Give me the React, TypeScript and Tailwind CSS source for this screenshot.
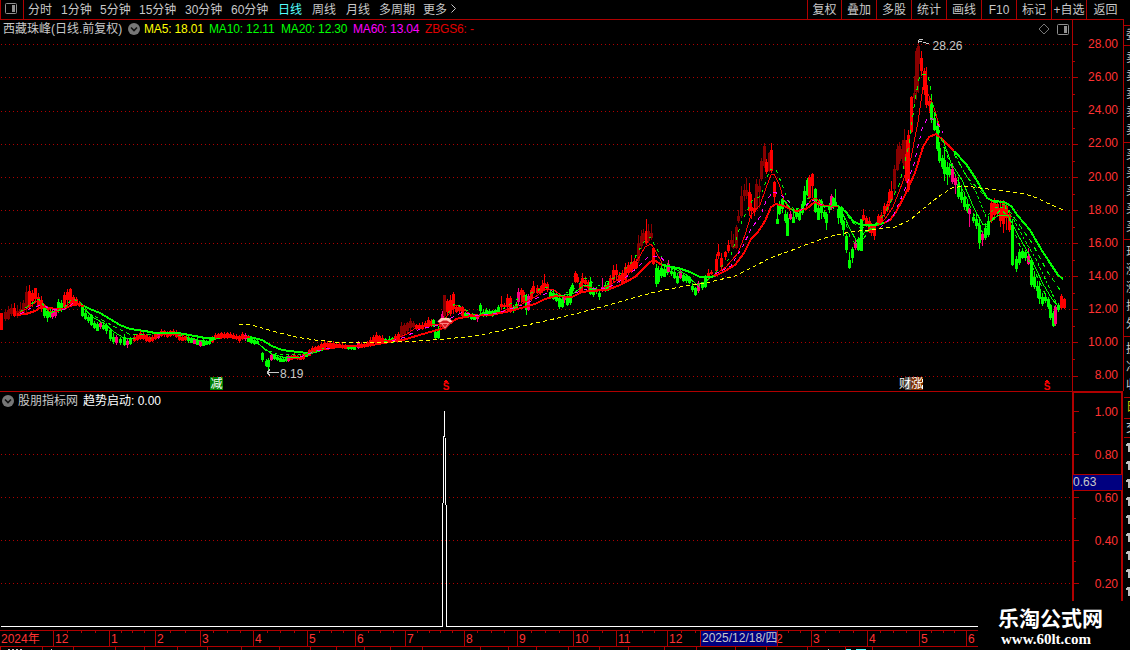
import React from "react";

type Tone = "r" | "d" | "g" | "p";
const tones: Record<Tone, string> = { r: "#ff0000", d: "#880000", g: "#00ff00", p: "#ff0080" };

// Each candle: x wickTop bodyTop bodyBottom wickBottom tone
const CANDLES = `
1 313 313 329 329 r;5 309 312 318 320 d;8 306 310 318 319 d;11 304 308 313 315 d;14 303 308 315 316 r;17 305 311 315 317 d;20 302 309 313 315 d;23 300 303 312 314 d;26 286 292 307 312 d;29 285 291 306 309 r;32 290 293 300 306 r;35 288 288 298 302 r;38 293 297 305 308 r;41 296 300 308 311 r;44 306 308 315 317 g;47 308 311 317 321 g;50 309 312 316 317 g;52 309 311 316 318 p;55 308 310 315 317 p;58 299 302 310 312 g;61 300 303 309 311 g;64 292 295 306 308 r;67 289 292 299 303 r;70 288 289 303 304 r;73 295 297 303 304 r;76 297 299 304 305 r;79 301 303 305 306 r;
82 304 307 315 316 g;85 310 313 318 319 g;88 315 317 320 322 g;91 314 315 324 325 g;94 321 323 327 328 g;97 322 324 330 330 g;100 322 323 326 328 p;103 322 325 328 329 g;106 323 325 330 333 g;110 328 330 338 340 g;113 333 337 341 343 g;116 335 337 342 344 p;120 337 339 342 344 g;124 334 337 344 345 g;127 338 341 344 347 p;130 337 339 343 344 g;134 335 337 340 341 r;137 334 335 339 340 r;140 331 333 338 339 r;143 332 334 338 339 r;146 334 335 340 341 r;149 336 337 341 341 r;152 335 337 340 341 r;155 332 334 338 339 r;158 333 334 337 338 p;161 329 331 335 336 r;164 330 331 334 336 r;167 331 332 336 337 r;170 330 331 335 336 r;173 329 331 334 335 r;176 330 332 336 337 r;179 334 336 339 340 r;182 335 337 340 340 r;185 336 337 339 340 r;188 336 337 340 342 g;191 337 338 342 342 g;194 338 340 343 343 p;197 338 341 344 344 g;200 340 341 345 346 p;203 339 342 345 345 g;206 340 341 344 344 g;209 339 341 343 344 g;212 336 337 341 342 r;215 333 335 338 339 r;218 333 334 337 338 r;221 332 333 337 338 r;224 332 334 337 338 r;227 332 333 336 338 r;230 332 334 337 337 r;233 333 335 338 338 r;236 334 336 338 339 r;239 335 336 340 342 r;242 332 334 338 339 r;245 333 335 338 340 p;248 335 337 341 341 g;251 337 338 342 343 g;254 339 340 343 344 g;257 339 341 343 343 g;
262 352 353 359 361 g;266 359 361 365 366 g;268 358 360 366 372 g;271 354 355 359 360 p;274 354 355 358 359 g;277 356 357 359 360 g;280 357 358 361 361 g;283 357 359 361 361 g;286 356 357 360 361 g;288 355 356 360 361 p;291 355 356 359 359 r;294 353 355 358 358 r;297 355 356 358 359 r;300 354 357 359 359 r;303 352 354 358 359 r;306 352 354 356 356 g;309 349 350 355 355 r;312 346 348 352 353 r;315 346 347 351 352 r;318 345 346 350 350 r;321 342 344 348 349 r;324 341 343 347 348 r;327 341 343 346 347 r;330 342 343 347 347 r;333 341 343 345 346 r;336 342 344 347 347 r;339 342 344 347 347 r;342 343 345 347 348 r;345 344 345 348 348 r;348 345 346 348 349 g;351 346 347 348 349 g;354 346 347 349 349 g;358 341 343 347 348 p;361 343 344 347 347 r;364 342 344 346 347 r;367 341 342 346 346 r;370 337 340 345 346 r;373 335 337 342 343 r;376 332 335 341 342 r;379 335 336 341 342 r;382 335 338 341 341 r;385 338 339 342 342 g;389 336 339 342 342 g;392 337 338 342 342 g;395 334 336 340 340 r;398 332 334 339 340 r;
401 322 326 336 337 d;404 323 325 333 334 d;407 322 323 330 333 d;410 318 321 327 330 d;413 321 323 326 327 d;416 324 325 328 329 r;419 323 325 328 328 r;422 322 325 328 329 r;425 321 323 326 328 r;428 317 320 326 327 r;431 319 321 325 326 r;433 319 320 325 326 g;435 330 332 337 338 g;438 326 329 337 338 g;440 320 323 326 327 r;442 311 314 318 319 p;444 295 295 315 317 d;447 299 301 311 314 r;450 295 300 313 315 r;453 292 294 308 313 r;456 306 307 311 312 r;459 305 307 310 312 r;462 306 307 315 316 r;465 312 313 315 317 g;468 312 314 316 317 g;471 314 315 318 319 g;474 315 317 319 319 g;477 315 316 318 321 p;480 303 305 310 313 g;483 309 312 315 316 g;486 308 310 315 316 g;489 309 311 315 315 g;492 310 311 315 316 g;495 309 310 313 314 g;498 305 307 311 312 g;501 296 304 306 309 r;504 303 305 306 306 r;507 294 298 306 308 r;510 296 298 311 312 r;513 305 307 310 312 g;516 302 304 308 309 g;518 288 292 301 304 p;521 288 290 294 302 r;523 290 292 301 303 r;526 294 296 309 314 g;528 294 296 309 310 p;531 288 290 298 300 r;533 281 286 292 293 r;537 285 288 292 293 r;540 286 288 292 294 r;542 280 285 290 292 r;544 274 283 286 289 r;547 282 284 289 291 r;550 289 292 297 298 g;553 290 293 298 299 g;556 291 294 300 301 g;559 297 298 306 308 g;562 297 299 306 307 g;564 294 296 299 302 p;567 294 297 304 305 g;570 287 289 302 304 g;572 283 285 290 293 g;575 271 273 281 282 r;577 274 277 281 282 r;580 281 283 291 292 r;582 273 278 282 291 r;585 277 280 283 285 r;588 280 282 287 289 r;590 277 282 293 294 g;593 287 289 294 296 g;596 287 289 291 293 g;599 289 293 296 299 g;602 278 287 290 291 p;605 282 285 290 291 g;608 281 283 289 290 g;
610 275 278 288 289 r;613 265 270 279 281 r;616 264 270 274 280 r;619 272 275 280 282 r;622 270 273 283 284 r;625 263 267 279 280 r;628 262 265 272 274 r;631 255 262 271 272 r;634 258 261 268 270 r;636 259 262 267 268 r;638 235 243 260 262 d;641 230 236 245 248 d;643 229 233 239 241 d;646 219 231 242 244 r;648 224 231 240 242 d;651 224 233 237 239 d;653 247 248 263 264 r;
656 264 268 283 286 g;658 266 270 281 283 g;661 262 268 275 277 g;664 266 269 276 276 g;667 263 265 272 274 g;668 260 264 271 271 p;671 268 271 273 275 g;674 269 272 277 278 g;677 273 276 282 283 g;680 270 271 277 278 p;683 273 275 280 281 g;686 274 276 280 282 g;689 276 277 282 283 g;692 283 286 289 291 g;695 287 288 294 295 g;698 281 283 290 292 p;702 282 283 287 289 g;705 275 278 286 287 g;708 269 273 276 279 r;711 270 272 273 274 r;
716 254 259 270 272 r;718 244 252 255 258 r;721 253 258 266 268 r;725 251 252 256 259 r;728 240 245 250 252 r;731 231 240 243 246 d;733 234 244 247 248 d;736 225 227 247 248 d;738 210 216 220 222 d;741 186 196 215 217 d;744 184 190 195 200 d;746 178 190 195 198 d;749 183 192 210 215 r;751 194 207 210 218 r;754 198 208 211 215 r;756 179 184 207 208 d;759 179 186 191 207 d;761 158 161 178 180 d;764 143 146 165 167 d;766 159 162 171 173 r;769 152 153 170 171 d;771 143 150 170 172 r;
774 181 182 196 202 r;777 204 219 223 223 g;779 201 204 213 214 g;782 198 199 208 212 g;785 210 214 220 222 g;787 212 218 235 235 g;790 211 214 218 219 p;793 211 217 222 222 g;796 208 210 216 218 g;799 211 213 219 220 g;802 201 204 212 214 g;804 186 191 204 205 g;807 178 180 194 195 g;809 175 177 197 198 r;812 173 174 185 197 r;815 188 189 211 212 g;818 202 208 219 219 g;821 199 201 212 218 g;824 210 212 216 218 g;826 212 214 222 229 g;829 203 206 209 212 g;831 194 196 207 209 p;833 197 198 206 208 g;835 189 202 205 206 g;838 208 209 217 223 g;841 206 207 222 224 g;843 220 221 229 235 g;846 234 236 249 252 g;849 252 260 267 268 g;852 247 249 257 262 g;855 240 243 247 249 p;858 237 239 249 250 g;861 219 219 250 250 g;
863 209 215 219 220 r;866 216 218 224 226 r;869 217 221 231 232 r;871 223 225 232 235 r;874 224 225 235 239 r;878 214 216 223 225 r;881 212 215 221 222 r;884 203 206 213 216 r;887 201 204 209 211 r;889 189 192 202 205 r;891 181 191 199 201 r;894 165 169 188 192 d;897 145 149 169 170 d;899 142 146 160 163 d;902 140 149 158 162 d;904 129 140 165 168 d;906 140 154 180 182 r;908 130 135 189 191 r;911 96 97 131 132 r;914 76 93 97 102 d;916 48 51 91 99 d;918 43 46 63 92 d;921 51 58 70 75 r;924 68 71 89 94 r;926 67 85 104 107 r;929 98 101 105 112 r;931 95 104 119 122 g;
934 113 118 129 130 g;937 124 126 148 150 g;939 142 148 160 162 g;942 155 158 166 168 g;944 150 160 173 180 g;947 162 167 174 184 g;949 163 169 174 176 g;952 163 169 181 183 p;955 175 178 184 193 p;958 177 184 196 198 g;961 185 192 199 202 g;964 192 197 206 209 g;967 200 204 210 212 g;969 208 209 213 226 p;973 213 217 220 222 g;976 214 219 225 228 g;979 218 225 242 248 g;982 232 234 239 245 p;985 223 228 237 239 g;988 216 221 234 236 g;991 200 203 220 222 r;994 198 202 214 219 r;997 202 204 213 216 r;1000 200 208 220 226 r;1003 200 202 223 232 r;1006 203 206 217 229 r;1009 212 214 229 231 r;1012 219 225 264 265 g;1016 256 259 268 271 g;1019 249 252 262 264 g;1022 248 251 257 258 g;1025 250 252 257 260 g;1028 248 256 263 264 p;1031 258 260 284 286 g;1034 271 277 286 288 g;1037 281 286 290 297 g;1039 281 289 298 303 g;1042 293 297 303 305 g;1045 294 297 300 302 g;1048 297 299 306 308 g;1050 304 305 317 319 g;1053 311 313 325 326 g;1055 305 307 323 325 p;1058 303 305 309 311 g;1061 294 296 307 308 r;1064 298 299 307 308 r`
  .split(";")
  .map((row) => {
    const [x, wt, bt, bb, wb, tone] = row.trim().split(" ");
    return { x: +x, wt: +wt, bt: +bt, bb: +bb, wb: +wb, tone: tone as Tone };
  });

interface Line { c: string; w?: number; dash?: string; pts: string }

const R = "#ff0000";
const G = "#00ff00";
const M = "#ff00ff";

const lines: Line[] = [
  { c: R, w: 2, pts: "17,315 26,314 35,311 40,308 46,307 55,309 64,309 70,306 78,304 84,306" },
  { c: G, w: 2, pts: "84,306 90,309 100,313 110,319 120,325 130,329 145,331 155,333 178,333 195,336 205,338 215,338" },
  { c: R, w: 2, pts: "215,338 230,337 250,337" },
  { c: G, w: 2, pts: "250,337 262,340 272,346 282,350 298,352 308,353" },
  { c: R, w: 2, pts: "308,353 318,350 332,348 345,346 372,345 390,342 403,340 416,336 430,332 444,328 456,319 470,316 490,315 510,311 525,307 535,304 545,299 556,296 572,297 582,292 590,291 607,290 620,285 635,277 643,269 650,262 654,260 662,265" },
  { c: G, w: 2, pts: "662,265 678,268 690,272 700,277 710,277 715,276" },
  { c: R, w: 2, pts: "715,276 725,271 735,265 744,253 751,239 758,232 765,221 771,207 776,204 784,206 790,209 797,211 806,209 815,202 820,205 828,206 838,206" },
  { c: G, w: 2, pts: "838,206 846,212 853,221 861,225 874,225 884,223" },
  { c: R, w: 2, pts: "884,223 890,220 896,212 905,195 915,173 923,147 929,137 936,134 943,140 954,151" },
  { c: G, w: 2, pts: "954,151 966,164 976,179 987,198 993,201 1004,202 1011,206 1018,216 1030,230 1041,249 1050,263 1058,275 1063,279" },
  { c: R, pts: "17,314 28,308 37,301 43,303 49,311 57,312 64,308 70,303 77,302 82,307" },
  { c: G, pts: "82,307 94,318 105,324 114,332 124,338 135,338 151,338" },
  { c: R, pts: "135,338 150,338 165,334 178,334 190,338" },
  { c: G, pts: "190,338 205,342 220,338" },
  { c: R, pts: "220,337 232,336 248,337" },
  { c: G, pts: "248,338 260,345 272,354 286,358 300,357 310,354 323,350" },
  { c: R, pts: "300,357 312,352 325,347 342,346 360,347 376,342 392,340 407,334 417,327 430,325 440,324 450,313 456,305 463,309 470,314 485,316 500,312 520,305 535,297 546,289 554,290 562,296" },
  { c: G, pts: "560,296 574,293 583,286 590,285" },
  { c: R, pts: "584,286 600,290 613,283 625,275 637,261 645,247 651,244 656,252 662,263" },
  { c: G, pts: "662,264 675,269 687,275 697,285 706,281 713,276" },
  { c: R, pts: "713,276 726,267 738,253 745,235 751,215 760,205 766,188 771,175 774,174 779,184 784,200 790,211" },
  { c: G, pts: "784,200 790,208 797,214 804,210" },
  { c: R, pts: "806,207 811,200 816,198 822,205" },
  { c: G, pts: "825,207 838,205 845,218 850,229 857,242 865,232 875,228" },
  { c: R, pts: "877,226 885,219 893,207 902,184 911,158 918,122 923,87 926,90 932,102 940,127" },
  { c: G, pts: "943,140 951,163 962,180 973,206 983,225 988,224 998,215 1008,215 1018,235 1030,256 1043,284 1052,299 1058,306" },
  { c: G, dash: "3 2", pts: "954,152 964,172 976,192 986,217 995,208 1005,207 1014,220 1024,239 1036,259 1048,285 1057,304" },
  { c: G, dash: "4 3", pts: "20,312 31,304 39,299 49,313 63,309 72,299 80,302 90,314 104,321 115,327 129,334 154,335" },
  { c: G, dash: "4 4", pts: "178,335 200,341 215,339" },
  { c: G, dash: "3 3", pts: "255,340 265,350 278,354 292,355 305,354 325,348" },
  { c: G, dash: "3 5", pts: "444,320 455,303 464,309 475,315 500,311 519,298 536,291 546,287 560,296 574,289 585,278 598,286 618,276 633,261 643,243 650,237 656,247 666,266 690,279 700,287 713,275 730,258 742,221 752,201 761,196 770,169 776,169 786,195 795,212 805,201 815,193 825,208 837,205" },
  { c: G, dash: "4 5", pts: "841,207 850,237 858,247 870,229 884,215 899,185 909,145 915,100 920,74 928,74 933,105 943,145 952,168 966,197 982,232 1001,209 1009,218 1020,246 1034,270 1048,300 1055,307" },
  { c: G, dash: "5 4", pts: "954,154 967,177 980,191 991,201 1005,205 1018,223 1032,243 1047,271 1062,293" },
  { c: G, dash: "5 4", pts: "842,207 852,222 861,228 874,225" },
  { c: M, dash: "4 5", pts: "20,314 33,307 43,305 50,309 65,309 75,302" },
  { c: M, dash: "4 5", pts: "300,357 316,351 330,348" },
  { c: M, dash: "4 5", pts: "392,341 405,337 420,329 440,325 453,317 463,312 476,316 498,313 525,304 541,296 552,290" },
  { c: M, dash: "4 5", pts: "575,293 590,288 606,289 625,278 639,266 648,257 660,256 666,263" },
  { c: M, dash: "4 4", pts: "715,274 731,266 743,246 751,229 760,217 766,201 773,192 780,194 790,203" },
  { c: M, dash: "4 4", pts: "800,211 812,200 824,206" },
  { c: M, dash: "4 5", pts: "880,228 893,216 904,192 914,164 922,129 928,117 936,121 943,133" },
  { c: "#ffff00", dash: "4 3", pts: "239,324 252,325 265,329 280,333 296,337 315,340 335,342 365,342 393,342 418,341 445,339 475,336 509,329 545,321 575,314 605,306 633,298 655,292 680,287 710,282 735,276 753,267 770,258 790,251 808,244 828,237 850,232 878,229 895,227 910,220 923,209 938,197 952,188 965,186 980,188 1005,191 1025,194 1037,198 1045,202 1052,205 1063,210" },
];

const priceRows = ["28.00", "26.00", "24.00", "22.00", "20.00", "18.00", "16.00", "14.00", "12.00", "10.00", "8.00"];
const priceY = [44, 77, 111, 144, 177, 210, 243, 276, 309, 342, 376];
const indRows = ["1.00", "0.80", "0.60", "0.40", "0.20"];
const indY = [411, 454, 497, 540, 583];

const periods: [string, string][] = [
  ["分时", "w-[33px]"], ["1分钟", "w-[39px]"], ["5分钟", "w-[39px]"], ["15分钟", "w-[46px]"], ["30分钟", "w-[46px]"],
  ["60分钟", "w-[47px]"], ["日线", "w-[34px]"], ["周线", "w-[34px]"], ["月线", "w-[33px]"], ["多周期", "w-[44px]"], ["更多", "w-[26px]"],
];
const tools: [string, string][] = [
  ["复权", "w-[34px]"], ["叠加", "w-[35px]"], ["多股", "w-[35px]"], ["统计", "w-[35px]"], ["画线", "w-[35px]"],
  ["F10", "w-[35px]"], ["标记", "w-[35px]"], ["+自选", "w-[35px]"], ["返回", "w-[38px]"],
];
const months: [string, string][] = [
  ["2024年", "w-[53px]"], ["12", "w-[56px]"], ["1", "w-[46px]"], ["2", "w-[45px]"], ["3", "w-[53px]"], ["4", "w-[54px]"],
  ["5", "w-[48px]"], ["6", "w-[50px]"], ["7", "w-[59px]"], ["8", "w-[53px]"], ["9", "w-[56px]"], ["10", "w-[43px]"],
  ["11", "w-[51px]"], ["12", "w-[107px]"], ["2", "w-[37px]"], ["3", "w-[56px]"], ["4", "w-[52px]"], ["5", "w-[47px]"], ["6", "w-[12px]"],
];
const monthX = [0, 53, 109, 155, 200, 253, 307, 355, 405, 464, 517, 573, 616, 667, 777, 811, 867, 919, 966];
const lowerTicks = [0, 42, 73, 115, 144, 177, 207, 241, 279, 310, 336, 364, 390, 422, 480, 508, 536, 568, 599, 628, 664, 696, 735, 766, 807, 845, 872];

function PanelIcon() {
  return (
    <svg width="12" height="11" viewBox="0 0 12 11" className="shrink-0" fill="none" stroke="#909090">
      <rect x=".5" y=".5" width="11" height="10" rx="1" />
      <path d="M7 2h3v7H7z" fill="#909090" stroke="none" />
    </svg>
  );
}

function CollapseIcon() {
  return (
    <svg width="12" height="12" viewBox="0 0 12 12" className="shrink-0">
      <circle cx="6" cy="6" r="6" fill="#777" />
      <path d="M3 4.5 6 7.5 9 4.5" fill="none" stroke="#111" strokeWidth="1.6" />
    </svg>
  );
}

function Signal({ x }: { x: number }) {
  return (
    <g fill={R}>
      <path d={`M${x - 2.5} 382l2.5-3 2.5 3z`} />
      <text x={x} y="390" fontSize="10" fontWeight="bold" textAnchor="middle">S</text>
    </g>
  );
}

function PriceChart() {
  return (
    <svg width="1072" height="353" viewBox="0 38 1072 353" className="block" shapeRendering="crispEdges">
      {priceY.map((y) => (
        <path key={y} d={`M1 ${y + 0.5}H1072`} stroke="#b00000" strokeDasharray="1 3" />
      ))}
      {CANDLES.map((k, i) => (
        <g key={i} fill={tones[k.tone]}>
          <rect x={k.x} y={k.wt} width="1" height={k.wb - k.wt + 1} />
          <rect x={k.x - 1} y={k.bt} width="3" height={k.bb - k.bt + 1} />
        </g>
      ))}
      {lines.map((l, i) => (
        <polyline key={i} points={l.pts} fill="none" stroke={l.c} strokeWidth={l.w ?? 1} strokeDasharray={l.dash} />
      ))}
      <g shapeRendering="auto">
        <path d="M437.5 321.5l3.5-3.5h8l3.500 3.500-7.500 8.500z" fill="#d71920" />
        <path d="M437.500 321.500l3.500-3.500h8l3.500 3.500-2.500 1-3-2h-4l-3 2z" fill="#ffc8b8" />
        <path d="M440 323.500h9M442 324l3 4 3-4" stroke="#ff8080" fill="none" />
      </g>
      <g stroke="#c8c8c8" fill="none">
        <path d="M918.5 43v-3M919 39.500h4M919 41.500h3M923 42.500h3M926 43.500h3" />
        <path d="M267 372.5h12M267 372.5l3-3M267 372.5l3 3" />
      </g>
      <g fill="#c8c8c8" fontSize="12" className="font-['Liberation_Sans',sans-serif]">
        <text x="932.5" y="50">28.26</text>
        <text x="280" y="378">8.19</text>
      </g>
      <rect x="210" y="377" width="13" height="13" fill="#008000" />
      <rect x="905" y="377" width="6" height="13" fill="#555" />
      <rect x="911" y="377" width="12" height="13" fill="#803000" />
      <g fill="#fff" fontSize="12">
        <text x="210.5" y="388">减</text>
        <text x="899" y="388">财</text>
        <text x="911" y="388">涨</text>
      </g>
      <path d="M922.5 379v3M922.5 385v4" stroke="#fff" />
      <Signal x={446} />
      <Signal x={1047} />
    </svg>
  );
}

function TriggerChart() {
  return (
    <svg width="1072" height="221" viewBox="0 409 1072 221" className="block" shapeRendering="crispEdges">
      {indY.slice(1).map((y) => (
        <path key={y} d={`M1 ${y + 0.5}H1072`} stroke="#b00000" strokeDasharray="1 3" />
      ))}
      <path d="M1 626.5H442.5V547l1-85 1-51 1 51 1 85V626.5H978" fill="none" stroke="#fff" />
    </svg>
  );
}

function ScaleTicks({ ys, top, height, half }: { ys: number[]; top: number; height: number; half: number }) {
  return (
    <svg width="6" height={height} viewBox={`0 ${top} 6 ${height}`} className="block shrink-0" stroke="#b00000" shapeRendering="crispEdges">
      {ys.map((y) => (
        <path key={y} d={`M0 ${y + 0.5}h5M0 ${y + half + 0.5}h2`} />
      ))}
    </svg>
  );
}

function SideStrip() {
  const cell = "flex shrink-0 flex-col overflow-hidden border-b border-[#b00000] pl-[2px] whitespace-nowrap";
  return (
    <div className="flex h-[580px] w-[6px] shrink-0 flex-col overflow-hidden text-[12px] leading-[18px]">
      <div className={`${cell} h-[6px]`} />
      <div className={`${cell} h-[20px]`}>委</div>
      <div className={`${cell} h-[97px] pt-[3px]`}>{[1, 2, 3, 4, 5].map((n) => <span key={n}>卖</span>)}</div>
      <div className={`${cell} h-[97px] pt-[3px]`}>{[1, 2, 3, 4, 5].map((n) => <span key={n}>买</span>)}</div>
      <div className={`${cell} h-[97px] pt-[3px]`}>{["现", "涨", "涨", "振", "外"].map((t, n) => <span key={n}>{t}</span>)}</div>
      <div className={`${cell} h-[61px] pt-[3px]`}>{["换", "净", "收"].map((t) => <span key={t}>{t}</span>)}</div>
      <div className={`${cell} h-[21px] text-[#c8c800]`}>日</div>
      <div className={`${cell} h-[19px]`}>交</div>
      <div className="flex flex-col gap-[6px] pt-[4px] pl-[2px]">
        {[1, 2, 3, 4, 5, 6, 7, 8, 9].map((n) => (
          <svg key={n} width="4" height="12" viewBox="0 0 4 12" className="shrink-0 fill-[#c0c0c0]" shapeRendering="crispEdges"><path d="M0 2h1V1h3v9H2V4H0z" /></svg>
        ))}
      </div>
    </div>
  );
}

export default function App() {
  return (
    <div className="relative flex h-[650px] w-[1130px] flex-col overflow-hidden bg-black font-['Liberation_Sans','Noto_Sans_CJK_SC',sans-serif] text-[12px] leading-[18px] text-[#c8c8c8]">
      <header className="flex h-[20px] w-[1124px] shrink-0 border-b border-[#b00000] leading-[20px] whitespace-nowrap">
        <div className="flex w-[24px] items-center border-x border-[#b00000] pb-[2px] pl-[4px]"><PanelIcon /></div>
        <nav className="flex flex-1 pl-[4px]">
          {periods.map(([t, w]) => (
            <span key={t} className={`${w} ${t === "日线" ? "text-[#54ffff]" : ""}`}>{t}</span>
          ))}
          <svg width="8" height="19" viewBox="0 0 8 19" fill="none" stroke="#c8c8c8"><path d="M2.5 4.5l4 4-4 4" /></svg>
        </nav>
        <div className="flex">
          {tools.map(([t, w]) => (
            <span key={t} className={`${w} flex justify-center border-l border-[#b00000]`}>{t}</span>
          ))}
        </div>
      </header>

      <div className="flex h-[610px] shrink-0">
        <main className="flex w-[1072px] shrink-0 flex-col">
          <div className="flex h-[18px] items-center pl-[3px] leading-[20px] whitespace-nowrap">
            <span className="w-[125px]">西藏珠峰(日线.前复权)</span>
            <CollapseIcon />
            <div className="flex flex-1 pl-[4px] tracking-[-0.15px]">
              <span className="w-[65px] text-[#ffff00]">MA5: 18.01</span>
              <span className="w-[72px] text-[#00ff00]">MA10: 12.11</span>
              <span className="w-[72px] text-[#00ff00]">MA20: 12.30</span>
              <span className="w-[72px] text-[#ff00ff]">MA60: 13.04</span>
              <span className="text-[#e00000]">ZBGS6: -</span>
            </div>
            <div className="flex items-center gap-[7px] pr-[3px]">
              <svg width="12" height="12" viewBox="0 0 12 12" fill="none" stroke="#777"><path d="M6 1l5 5-5 5-5-5z" /></svg>
              <PanelIcon />
            </div>
          </div>
          <PriceChart />
          <div className="flex h-[18px] items-center gap-[4px] border-t border-[#b00000] pl-[2px] whitespace-nowrap">
            <CollapseIcon />
            <span className="w-[61px]">股朋指标网</span>
            <span className="text-white">趋势启动: 0.00</span>
          </div>
          <TriggerChart />
        </main>

        <aside className="flex w-[51px] shrink-0 flex-col text-[#ff3232]">
          <div className="flex h-[371px] justify-between border-l border-[#b00000]">
            <ScaleTicks ys={priceY} top={20} height={371} half={17} />
            <div className="flex flex-col pt-[8px] pr-[5px] text-right">
              {priceRows.map((t) => <span key={t} className="h-[33.15px] shrink-0 leading-[33px]">{t}</span>)}
            </div>
          </div>
          <div className="relative flex h-[210px] justify-between border-2 border-b-0 border-[#b00000]">
            <ScaleTicks ys={indY} top={393} height={208} half={21} />
            <div className="flex h-[208px] flex-col overflow-hidden pr-[3px] text-right">
              {indRows.map((t) => <span key={t} className="h-[43px] shrink-0 leading-[38px]">{t}</span>)}
            </div>
            <div className="absolute top-[81px] -left-[1px] h-[17px] w-[49px] border-y border-[#b00000] bg-[#000080] leading-[15px] text-[#c8c8c8]">0.63</div>
          </div>
        </aside>
        <div className="h-[371px] w-px shrink-0 bg-[#b00000]" />
        <SideStrip />
      </div>

      <footer className="relative flex h-[20px] w-[978px] shrink-0 flex-col">
        <div className="flex h-[17px] border-y border-[#b00000] leading-[16px] text-[#ff3232]">
          {months.map(([t, w], i) => (
            <span key={i} className={`${w} shrink-0 whitespace-nowrap ${i ? "border-l border-[#b00000]" : ""} pl-[1px]`}>{t}</span>
          ))}
        </div>
        <svg width="978" height="3" viewBox="0 0 978 3" shapeRendering="crispEdges" stroke="#b00000">
          {lowerTicks.map((x) => <path key={x} d={`M${x + 0.5} 0v3`} />)}
          <path d="M8 2.5h2M12 2.5h2M16 2.5h2M20 2.5h2M51 2.5h1M828 2.5h1" stroke="#c8c8c8" />
          <path d="M846 2.5h5M856 2.5h10" stroke="#54ffff" strokeWidth="2" />
        </svg>
        <svg width="978" height="3" viewBox="0 0 978 3" className="absolute top-[1px] left-0" shapeRendering="crispEdges" stroke="#b00000">
          {monthX.slice(1, -1).flatMap((x, i) => {
            const span = monthX[i + 2] - x;
            const n = Math.round(span / 13);
            return Array.from({ length: n - 1 }, (_, j) => (
              <path key={`${x}-${j}`} d={`M${Math.round(x + (span * (j + 1)) / n) + 0.5} 0v2`} />
            ));
          })}
        </svg>
        <div className="absolute top-0 left-[700px] h-[17px] w-[78px] border border-[#b00000] bg-[#000080] pl-px leading-[15px] whitespace-nowrap">2025/12/18/四</div>
      </footer>

      <div className="absolute top-[601px] left-[978px] flex h-[49px] w-[152px] flex-col bg-black pl-[20px] font-bold text-white">
        <span className="h-[29px] text-[21px] leading-[35px]">乐淘公式网</span>
        <span className="pl-[3px] font-['Liberation_Serif',serif] text-[15px] leading-[18px]">www.60lt.com</span>
      </div>
    </div>
  );
}
